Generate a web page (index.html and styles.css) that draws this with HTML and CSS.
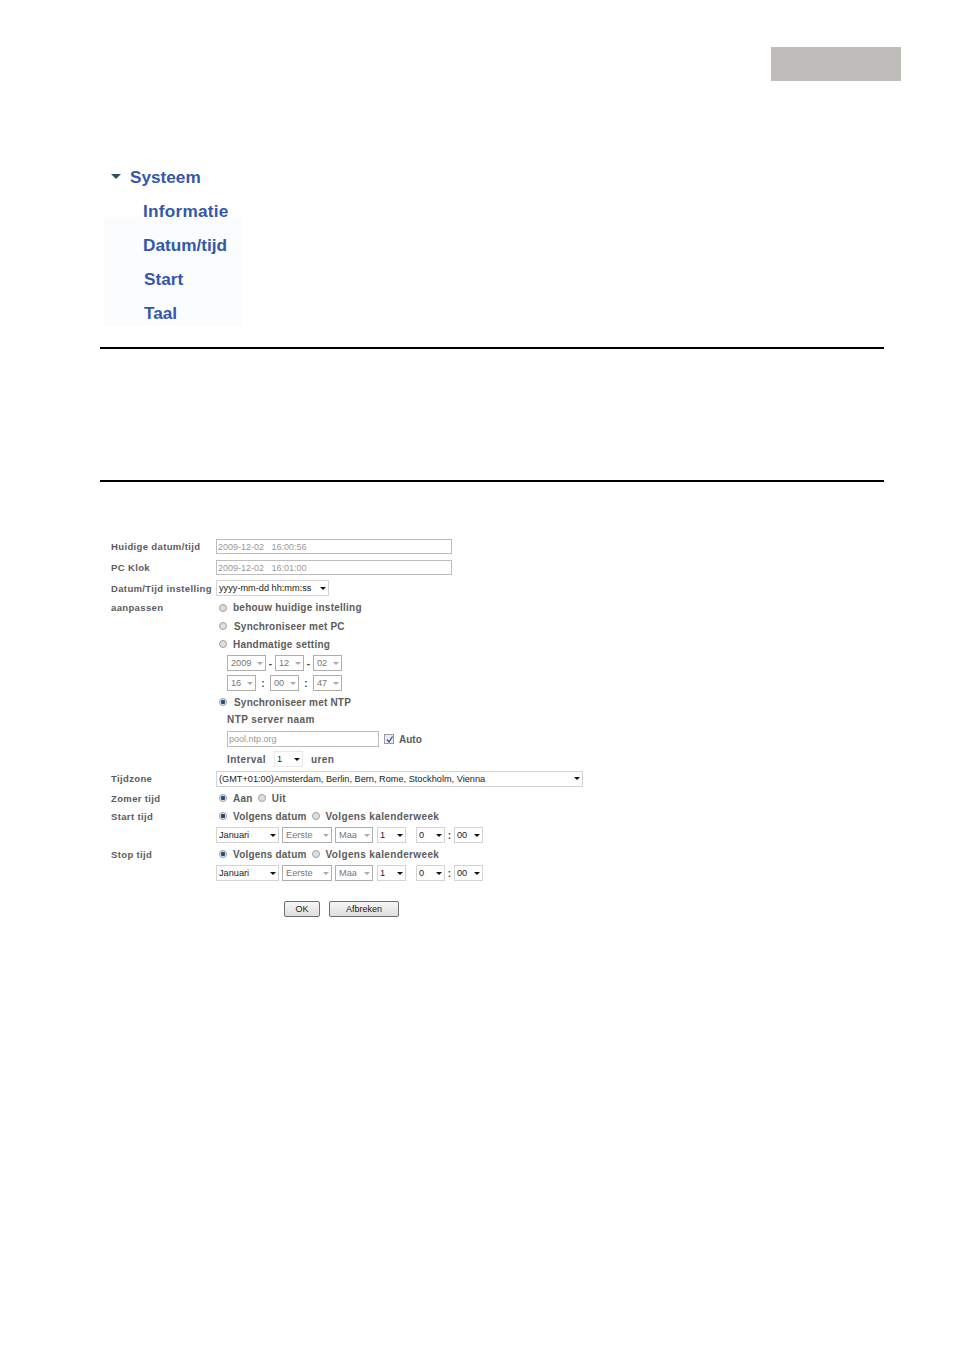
FILE: index.html
```html
<!DOCTYPE html>
<html lang="nl">
<head>
<meta charset="utf-8">
<title>Datum/tijd</title>
<link rel="stylesheet" href="styles.css">
</head>
<body>
<header class="top"><div class="tab"></div></header>

<nav class="menu">
  <div class="menu-head"><span class="caret"></span><span>Systeem</span></div>
  <div class="menu-item first">Informatie</div>
  <div class="menu-panel">
    <div class="menu-item">Datum/tijd</div>
    <div class="menu-item s1">Start</div>
    <div class="menu-item s1">Taal</div>
  </div>
</nav>

<hr class="rule">
<div class="gap"></div>
<hr class="rule">

<form class="form">
  <div class="row h21"><span class="lab">Huidige datum/tijd</span><span class="field wide">2009-12-02 &nbsp; 16:00:56</span></div>
  <div class="row h21"><span class="lab">PC Klok</span><span class="field wide">2009-12-02 &nbsp; 16:01:00</span></div>
  <div class="row h20"><span class="lab">Datum/Tijd instelling</span><span class="sel w113"><span>yyyy-mm-dd hh:mm:ss</span><i class="arrow"></i></span></div>
  <div class="row h19"><span class="lab">aanpassen</span><span class="opt"><i class="radio"></i><b>behouw huidige instelling</b></span></div>
  <div class="row h18"><span></span><span class="opt"><i class="radio"></i><b class="o1">Synchroniseer met PC</b></span></div>
  <div class="row h18"><span></span><span class="opt"><i class="radio"></i><b>Handmatige setting</b></span></div>
  <div class="row h20"><span></span><span class="sub">
    <span class="sel off w39"><span>2009</span><i class="arrow"></i></span><em class="sep">-</em>
    <span class="sel off w29"><span>12</span><i class="arrow"></i></span><em class="sep">-</em>
    <span class="sel off w29"><span>02</span><i class="arrow"></i></span></span></div>
  <div class="row h20"><span></span><span class="sub">
    <span class="sel off w29"><span>16</span><i class="arrow"></i></span><em class="sep wide-sep">:</em>
    <span class="sel off w29"><span>00</span><i class="arrow"></i></span><em class="sep wide-sep">:</em>
    <span class="sel off w29"><span>47</span><i class="arrow"></i></span></span></div>
  <div class="row h18"><span></span><span class="opt"><i class="radio on"></i><b class="o1">Synchroniseer met NTP</b></span></div>
  <div class="row h17"><span></span><span class="sub"><b class="txt">NTP server naam</b></span></div>
  <div class="row h22"><span></span><span class="sub"><span class="field ntp">pool.ntp.org</span><i class="check"><svg viewBox="0 0 9 9" width="9" height="9"><path d="M2 4.5 L4 7 L7.5 1.5" fill="none" stroke="#3b4f8c" stroke-width="1.3"/></svg></i><b class="txt auto">Auto</b></span></div>
  <div class="row h18"><span></span><span class="sub"><b class="txt">Interval</b><span class="sel bare w29 ml8"><span>1</span><i class="arrow"></i></span><b class="txt ml8">uren</b></span></div>
  <div class="row h21"><span class="lab">Tijdzone</span><span class="sel w367"><span>(GMT+01:00)Amsterdam, Berlin, Bern, Rome, Stockholm, Vienna</span><i class="arrow"></i></span></div>
  <div class="row h18"><span class="lab">Zomer tijd</span><span class="opt"><i class="radio on"></i><b>Aan</b><i class="radio ml6"></i><b class="ml5">Uit</b></span></div>
  <div class="row h18"><span class="lab">Start tijd</span><span class="opt"><i class="radio on"></i><b class="d">Volgens datum</b><i class="radio ml6"></i><b class="ml5">Volgens kalenderweek</b></span></div>
  <div class="row h20"><span></span><span class="line">
    <span class="sel w63"><span>Januari</span><i class="arrow"></i></span>
    <span class="sel off w50"><span>Eerste</span><i class="arrow"></i></span>
    <span class="sel off w38"><span>Maa</span><i class="arrow"></i></span>
    <span class="sel w29 ml1"><span>1</span><i class="arrow"></i></span>
    <span class="sel w29 ml7"><span>0</span><i class="arrow"></i></span><em class="sep tight">:</em>
    <span class="sel w29"><span>00</span><i class="arrow"></i></span></span></div>
  <div class="row h18"><span class="lab">Stop tijd</span><span class="opt"><i class="radio on"></i><b class="d">Volgens datum</b><i class="radio ml6"></i><b class="ml5">Volgens kalenderweek</b></span></div>
  <div class="row h20"><span></span><span class="line">
    <span class="sel w63"><span>Januari</span><i class="arrow"></i></span>
    <span class="sel off w50"><span>Eerste</span><i class="arrow"></i></span>
    <span class="sel off w38"><span>Maa</span><i class="arrow"></i></span>
    <span class="sel w29 ml1"><span>1</span><i class="arrow"></i></span>
    <span class="sel w29 ml7"><span>0</span><i class="arrow"></i></span><em class="sep tight">:</em>
    <span class="sel w29"><span>00</span><i class="arrow"></i></span></span></div>
  <div class="buttons"><span class="btn ok">OK</span><span class="btn cancel">Afbreken</span></div>
</form>
</body>
</html>
```

FILE: styles.css
```css
* { box-sizing: border-box; }
html, body { margin: 0; padding: 0; }
body {
  width: 954px;
  height: 1350px;
  background: #fff;
  font-family: "Liberation Sans", Arial, sans-serif;
  overflow: hidden;
}

.top { display: flex; justify-content: flex-end; padding: 47px 53px 0 0; }
.tab { width: 130px; height: 34px; background: #bfbdba; }

.menu { margin: 79px 0 0 104px; width: 138px; color: #3557a8; font-weight: bold; font-size: 17.2px; }
.menu-head { display: flex; align-items: center; height: 34px; padding-left: 7px; gap: 9px; }
.caret { width: 0; height: 0; border-left: 5px solid transparent; border-right: 5px solid transparent; border-top: 5px solid #2f5060; margin-top: -1px; }
.menu-item { display: flex; align-items: center; height: 34px; padding-left: 39px; }
.menu-item.first { height: 23px; align-items: flex-start; line-height: 34px; letter-spacing: 0.25px; }
.menu-item.s1 { padding-left: 40px; }
.menu-panel { background: #fbfcfe; height: 109px; padding-top: 11px; }

.rule { margin: 0 0 0 100px; width: 784px; height: 2px; border: 0; background: #000; }
.menu + .rule { margin-top: 21px; }
.gap { height: 131px; }

.form { margin-top: 54px; padding-left: 111px; font-size: 9.5px; color: #5c5c5c; }
.row { display: grid; grid-template-columns: 105px 1fr; align-items: center; }
.h17 { height: 17px; } .h18 { height: 18px; } .h19 { height: 19px; } .h20 { height: 20px; }
.h21 { height: 21px; } .h22 { height: 22px; }

.lab { font-weight: bold; letter-spacing: 0.36px; white-space: nowrap; }

.field {
  display: flex; align-items: center; height: 15px; padding-left: 1px;
  border: 1px solid #bdbdbd; color: #999; font-size: 9px; background: #fff; white-space: nowrap;
}
.field.wide { width: 236px; }
.field.ntp { width: 152px; height: 16px; }

.sel {
  display: inline-flex; align-items: center; justify-content: space-between; flex: none;
  height: 16px; padding: 0 2px 0 2px; border: 1px solid #d4d4d4; background: #fff;
  color: #222; font-size: 9.2px; white-space: nowrap;
}
.sel.off { color: #777; border-color: #aeaeae; padding-left: 3px; }
.sel.bare { border-color: #e8e8e8; }
.arrow { width: 0; height: 0; border-left: 3px solid transparent; border-right: 3px solid transparent; border-top: 3px solid #111; flex: none; }
.sel.off .arrow { border-top-color: #aaa; }
.w29 { width: 29px; } .w38 { width: 38px; } .w39 { width: 39px; } .w50 { width: 50px; }
.w63 { width: 63px; } .w113 { width: 113px; } .w367 { width: 367px; }

.opt { display: flex; align-items: center; padding-left: 3px; font-size: 10px; }
.opt b { margin-left: 6px; letter-spacing: 0.24px; white-space: nowrap; }
.opt b.o1 { margin-left: 7px; letter-spacing: 0.2px; }
.opt b.d { letter-spacing: 0.2px; }
.opt b.ml5 { margin-left: 6px; letter-spacing: 0.36px; }
.radio {
  flex: none; display: block; width: 8px; height: 8px; border-radius: 50%;
  border: 1px solid #a0a0a0; background: #dedede;
}
.radio.on { background: radial-gradient(circle, #1d4f86 0 2px, #eee 2.5px); border-color: #999; }
.radio.ml6 { margin-left: 5px; }

.sub { display: flex; align-items: center; padding-left: 11px; }
.txt { font-size: 10px; letter-spacing: 0.42px; white-space: nowrap; }
.sep { width: 9px; text-align: center; font-style: normal; font-weight: bold; font-size: 10px; color: #444; }
.sep.wide-sep { width: 14px; }
.sep.tight { width: 9px; }
.check {
  display: block; flex: none; width: 10px; height: 10px; margin-left: 5px;
  border: 1px solid #9a9a9a; background: #e9edf5; line-height: 0;
}
.check svg { display: block; margin: -0.5px; }
.auto { margin-left: 5px; letter-spacing: 0; font-weight: bold; }
.ml8 { margin-left: 8px; }

.line { display: flex; align-items: center; gap: 3px; }
.line .sep { margin: 0 -3px; }
.ml1 { margin-left: 1px; }
.ml7 { margin-left: 7px; }

.buttons { display: flex; gap: 9px; margin: 18px 0 0 173px; }
.btn {
  display: flex; align-items: center; justify-content: center; height: 16px;
  border: 1px solid #6e6e6e; border-radius: 2px; font-size: 9px; color: #222;
  background: linear-gradient(#f6f6f6, #dedede);
}
.ok { width: 36px; }
.cancel { width: 70px; }
```
